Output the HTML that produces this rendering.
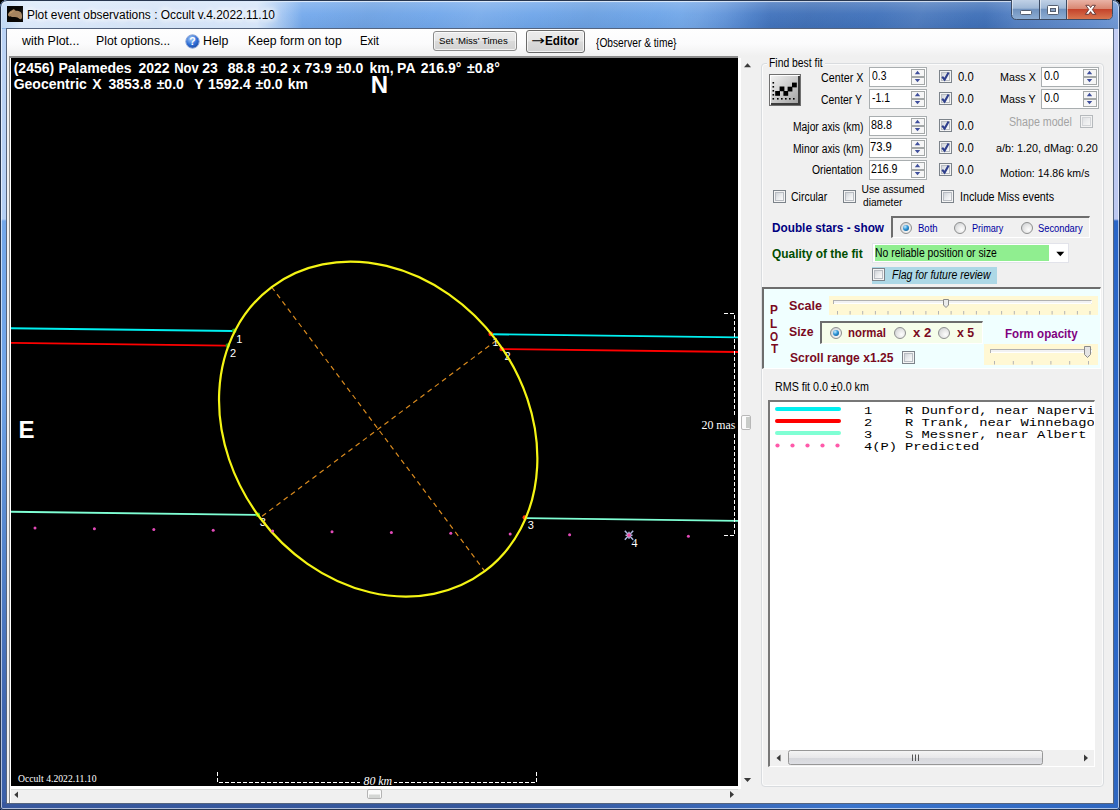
<!DOCTYPE html>
<html><head><meta charset="utf-8"><title>Plot event observations</title>
<style>
html,body{margin:0;padding:0;}
body{width:1120px;height:810px;overflow:hidden;background:#000;position:relative;font-family:"Liberation Sans",sans-serif;font-size:12px;color:#000;}
#win,#win div,#win svg{position:absolute;box-sizing:border-box;}
#win{left:0;top:0;width:1120px;height:810px;border-radius:7px 7px 3px 3px;overflow:hidden;background:#4a78c0;}
.t{white-space:pre;line-height:16px;height:16px;}
.btn{border:1px solid #8a8a8a;border-radius:3px;background:linear-gradient(180deg,#ececec 0,#e6e6e6 48%,#dadada 52%,#d2d2d2 100%);box-shadow:inset 0 0 0 1px rgba(255,255,255,.7);}
.cb{width:13px;height:13px;border:1px solid #7c838a;background:#f4f4f4;}
.cb::after{content:"";position:absolute;box-sizing:border-box;left:1px;top:1px;width:9px;height:9px;border:1px solid #b8bcc2;background:linear-gradient(135deg,#cfd3d8 0,#e9ebed 50%,#fbfbfb 100%);}
.rb{width:12px;height:12px;border:1px solid #8e8f8f;border-radius:50%;background:radial-gradient(circle at 65% 65%,#fdfdfd 0,#e8e8e8 45%,#c4c8cc 100%);}
.rb.on::after{content:"";position:absolute;left:2px;top:2px;width:6px;height:6px;border-radius:50%;background:radial-gradient(circle at 35% 30%,#c8ecff 0,#2b93d6 45%,#0f4a78 100%);}
.num{height:20px;width:58px;border:1px solid #a9aeb0;background:#fff;}
.sunk{border:1px solid #fff;border-top:2px solid #6d6d6d;border-left:2px solid #6d6d6d;}

</style></head><body>
<div id="win">
<!-- window frame glass -->
<div style="left:0;top:0;width:1120px;height:30px;background:linear-gradient(90deg,#8dbaf0 0,#74a9ec 300px,#6ca4e8 680px,#5b90d8 725px,#4274be 770px,#3f70b8 985px,#5583c8 1015px,#6a94d4 1120px)"></div>
<div style="left:0;top:0;width:1120px;height:30px;background:linear-gradient(180deg,rgba(255,255,255,.45) 0,rgba(255,255,255,.18) 3px,rgba(255,255,255,.04) 14px,rgba(0,0,0,.04) 30px)"></div>
<div style="left:0;top:0;width:1120px;height:30px;background:repeating-linear-gradient(115deg,rgba(255,255,255,0) 0,rgba(255,255,255,.07) 40px,rgba(255,255,255,0) 90px,rgba(0,0,0,.03) 140px,rgba(255,255,255,0) 200px)"></div>
<div style="left:2px;top:2px;width:300px;height:26px;background:linear-gradient(90deg,rgba(255,255,255,.45) 0,rgba(255,255,255,.68) 20px,rgba(255,255,255,.68) 255px,rgba(255,255,255,.3) 280px,rgba(255,255,255,0) 300px)"></div>
<div style="left:0;top:29px;width:8px;height:781px;background:linear-gradient(180deg,#bcd4f6 0,#b4cff4 190px,#74a8ea 192px,#6fa4e8 360px,#5384cc 520px,#3f66b0 680px,#3a5fa8 781px)"></div>
<div style="left:1112px;top:29px;width:8px;height:781px;background:linear-gradient(180deg,#c2ccf2 0,#bcc8f0 190px,#2a66c8 192px,#2c68c8 600px,#2e66c0 781px)"></div>
<div style="left:0;top:802px;width:1120px;height:8px;background:linear-gradient(90deg,#38589e 0,#35579c 500px,#3a66b4 700px,#3a74cc 850px,#2e66c0 1120px)"></div>
<div style="left:0;top:0;width:1120px;height:810px;border:1px solid #27364f;border-radius:7px 7px 3px 3px;box-shadow:inset 0 0 0 1px rgba(255,255,255,.6)"></div>
<div style="left:6px;top:28px;width:1108px;height:776px;border:1px solid #55647e;background:#f0f0f0"></div>
<!-- app icon -->
<svg style="left:7px;top:6px" width="16" height="16" viewBox="0 0 16 16"><rect width="16" height="16" fill="#070503"/><path d="M1 8.300 C1.500 6.500 3 5.300 4.500 4.600 C5.500 3.800 6.300 3 7 3.300 C7.600 3.600 8 4.500 9 4.700 C10.500 4.800 12.500 5 13.600 6 C14.800 7.200 15.200 9.500 15 11.300 C14.900 12.600 14.300 13.400 13.300 13.200 C12.300 13 11.800 12 10.500 11.500 C9 11 7 11 5.500 10.900 C3.800 10.800 2 10.600 1.300 9.700 C1 9.300 0.900 8.800 1 8.300Z" fill="#a5845f"/><path d="M1.800 8.200 C2.500 6.800 4 5.800 5.500 5.300 C6.300 4.800 6.800 4.200 7.200 4.600 C6.500 6 4.500 7.500 1.800 8.200Z" fill="#c9a06e" opacity=".8"/></svg>
<!-- caption buttons -->
<svg style="left:1009px;top:0" width="106" height="22" viewBox="0 0 106 22">
<defs><linearGradient id="cbg" x1="0" y1="0" x2="0" y2="1"><stop offset="0" stop-color="#c4d4e8"/><stop offset=".45" stop-color="#9fb8d6"/><stop offset=".5" stop-color="#7092be"/><stop offset="1" stop-color="#8eaed4"/></linearGradient>
<linearGradient id="cbr" x1="0" y1="0" x2="0" y2="1"><stop offset="0" stop-color="#e9b3a6"/><stop offset=".45" stop-color="#d98873"/><stop offset=".5" stop-color="#c5442c"/><stop offset="1" stop-color="#d9764f"/></linearGradient></defs>
<path d="M2.500 -1 V14.500 Q2.500 19.500 7.500 19.500 H98.500 Q103.500 19.500 103.500 14.500 V-1Z" fill="url(#cbg)" stroke="#3c4b63" stroke-width="1"/>
<path d="M57.500 0 V19 H98.500 Q103 19 103 14.500 V0Z" fill="url(#cbr)"/>
<path d="M30.500 0V19.500M57.500 0V19.500" stroke="#3c4b63"/><path d="M31.500 0V19M58.500 0V19M3.500 0V15" stroke="rgba(255,255,255,.5)"/>
<rect x="11.500" y="10.500" width="11" height="4" rx="1" fill="#fff" stroke="#555f70" stroke-width="1"/>
<rect x="38.500" y="5.500" width="11" height="9" rx="1" fill="#fff" stroke="#555f70"/><rect x="41.500" y="8.500" width="5" height="3" fill="#8ca3c4" stroke="#555f70"/>
<path d="M76.800 5.300 L80 5.300 L81.600 7.600 L83.200 5.300 L86.400 5.300 L83.400 9.600 L86.800 14.300 L83.400 14.300 L81.600 11.600 L79.800 14.300 L76.400 14.300 L79.800 9.600Z" fill="#fff" stroke="#5a3030" stroke-width="0.900"/>
</svg>
<!-- menu strip -->
<div style="left:7px;top:29px;width:1106px;height:27px;background:linear-gradient(180deg,#fefefe 0,#fbfbfc 55%,#f0f0f0 100%)"></div>
<svg style="left:185px;top:34px" width="15" height="15" viewBox="0 0 15 15"><defs><radialGradient id="hg" cx=".4" cy=".3" r=".8"><stop offset="0" stop-color="#a8ccf8"/><stop offset=".55" stop-color="#2f6fd6"/><stop offset="1" stop-color="#163f9a"/></radialGradient></defs><circle cx="7.500" cy="7.500" r="6.700" fill="url(#hg)" stroke="#8fa8d8" stroke-width="1"/><text x="7.500" y="11.300" text-anchor="middle" font-family="Liberation Sans,sans-serif" font-weight="bold" font-size="10.500" fill="#fff">?</text></svg>
<div class="btn" style="left:433px;top:31px;width:84px;height:20px"></div>
<div class="btn" style="left:526px;top:30px;width:59px;height:23px;border-color:#6a6a6a"></div>
<!-- plot area -->
<div style="left:9px;top:56px;width:746px;height:747px;background:#fff"></div><div style="left:9px;top:56px;width:729px;height:2px;background:#8c8c8c"></div><div style="left:9px;top:56px;width:1px;height:747px;background:#8c8c8c"></div><div style="left:738px;top:56px;width:17px;height:2px;background:#f0f0f0"></div>
<div style="left:741px;top:58px;width:14px;height:731px;background:#f0f0f0"></div>
<div style="left:11px;top:789px;width:727px;height:14px;background:#f0f0f0;border-top:1px solid #dcdedc"></div>
<div style="left:738px;top:789px;width:17px;height:14px;background:#f0f0f0"></div>
<div style="left:11px;top:58px;width:727px;height:728px;background:#000"></div>
<svg style="left:11px;top:58px" width="727" height="728" viewBox="11 58 727 728" font-family="Liberation Sans,sans-serif">
<line x1="11" y1="328.24" x2="232.5" y2="331.01" stroke="#00f0f0" stroke-width="1.800"/>
<line x1="492.5" y1="334.26" x2="738" y2="337.32" stroke="#00f0f0" stroke-width="1.800"/>
<line x1="11" y1="342.92" x2="226" y2="345.61" stroke="#ff0000" stroke-width="1.800"/>
<line x1="503" y1="349.07" x2="738" y2="352.01" stroke="#ff0000" stroke-width="1.800"/>
<line x1="11" y1="511.74" x2="256" y2="514.81" stroke="#7fffd4" stroke-width="1.800"/>
<line x1="526.5" y1="518.19" x2="738" y2="520.83" stroke="#7fffd4" stroke-width="1.800"/>
<line x1="271.6" y1="287.0" x2="484.8" y2="571.2" stroke="#d98a1e" stroke-width="1.200" stroke-dasharray="5 4"/>
<line x1="496.4" y1="340.4" x2="260.0" y2="517.8" stroke="#d98a1e" stroke-width="1.200" stroke-dasharray="5 4"/>
<circle cx="234.2" cy="330.8" r="2.300" fill="#1fae1f"/>
<circle cx="227.8" cy="345.6" r="2.300" fill="#1a8a1a"/>
<circle cx="257.8" cy="514.8" r="2.300" fill="#1fc81f"/>
<circle cx="490.7" cy="333.9" r="2.300" fill="#ff1010"/>
<circle cx="501.7" cy="349.0" r="2.300" fill="#ff1010"/>
<circle cx="524.8" cy="517.6" r="2.300" fill="#ff3a10"/>
<text x="236.3" y="343" font-size="11" fill="#fff">1</text>
<text x="230" y="356.8" font-size="11" fill="#fff">2</text>
<text x="259.7" y="526" font-size="11" fill="#fff">3</text>
<text x="492.6" y="345.7" font-size="11" fill="#fff">1</text>
<text x="504.4" y="359.8" font-size="11" fill="#fff">2</text>
<text x="527.7" y="529" font-size="11" fill="#fff">3</text>
<ellipse cx="378.2" cy="429.1" rx="177.6" ry="147.8" transform="rotate(53.13 378.2 429.1)" fill="none" stroke="#f4f414" stroke-width="2.200"/>
<circle cx="35.0" cy="528.0" r="1.500" fill="#e24ab8"/>
<circle cx="94.4" cy="528.7" r="1.500" fill="#e24ab8"/>
<circle cx="153.8" cy="529.5" r="1.500" fill="#e24ab8"/>
<circle cx="213.2" cy="530.2" r="1.500" fill="#e24ab8"/>
<circle cx="272.6" cy="531.0" r="1.500" fill="#e24ab8"/>
<circle cx="332.0" cy="531.7" r="1.500" fill="#e24ab8"/>
<circle cx="391.4" cy="532.5" r="1.500" fill="#e24ab8"/>
<circle cx="450.8" cy="533.2" r="1.500" fill="#e24ab8"/>
<circle cx="510.2" cy="533.9" r="1.500" fill="#e24ab8"/>
<circle cx="569.6" cy="534.7" r="1.500" fill="#e24ab8"/>
<circle cx="688.4" cy="536.2" r="1.500" fill="#e24ab8"/>
<g transform="translate(629,535.200)"><path d="M-4.200 -4.500L4.200 4.500M4.200 -4.500L-4.200 4.500M0 -3.500V3.500M-3.500 0H3.500" stroke="#aab6dc" stroke-width="1.500"/><circle r="2.400" fill="#b9a2d6"/><circle r="1.600" fill="#f0489c"/></g>
<text x="631.6" y="546.8" font-size="12" font-family="Liberation Serif,serif" fill="#fff">4</text>
<text y="73" font-size="14" font-weight="bold" fill="#fff"><tspan x="13.7">(2456)</tspan> <tspan x="58.5">Palamedes</tspan> <tspan x="138.4">2022</tspan> <tspan x="174.2" textLength="24.5" lengthAdjust="spacingAndGlyphs">Nov</tspan> <tspan x="202.2">23</tspan> <tspan x="227.7">88.8</tspan> <tspan x="260.6">±0.2</tspan> <tspan x="292.5">x</tspan> <tspan x="304.6">73.9</tspan> <tspan x="336.2">±0.0</tspan> <tspan x="369.4">km,</tspan> <tspan x="397.1">PA</tspan> <tspan x="420.7">216.9°</tspan> <tspan x="467.0">±0.8°</tspan></text>
<text y="88.8" font-size="14" font-weight="bold" fill="#fff"><tspan x="13.7">Geocentric</tspan> <tspan x="92.2">X</tspan> <tspan x="108.5">3853.8</tspan> <tspan x="156.7">±0.0</tspan> <tspan x="194.2">Y</tspan> <tspan x="207.9">1592.4</tspan> <tspan x="255.5">±0.0</tspan> <tspan x="287.8">km</tspan></text>
<text x="370.800" y="93.200" font-size="24" font-weight="bold" fill="#fff">N</text>
<text x="18.600" y="438" font-size="24" font-weight="bold" fill="#fff">E</text>
<path d="M217.500 772 V782.500 H360" fill="none" stroke="#fff" stroke-dasharray="4 2"/><path d="M536.500 772 V782.500 H394" fill="none" stroke="#fff" stroke-dasharray="4 2"/>
<text x="363.600" y="784.600" font-size="11.500" font-style="italic" font-family="Liberation Serif,serif" fill="#fff" textLength="28.500" lengthAdjust="spacingAndGlyphs">80 km</text>
<text x="18" y="781.500" font-size="10" font-family="Liberation Serif,serif" fill="#fff" textLength="78.500" lengthAdjust="spacingAndGlyphs">Occult 4.2022.11.10</text>
<path d="M724 313.500 H734.500 V417" fill="none" stroke="#fff" stroke-dasharray="4 2"/><path d="M724 535.500 H734.500 V433" fill="none" stroke="#fff" stroke-dasharray="4 2"/>
<text x="701.500" y="429" font-size="13.300" font-family="Liberation Serif,serif" fill="#fff" textLength="34" lengthAdjust="spacingAndGlyphs">20 mas</text>
</svg>
<svg style="left:738px;top:58px" width="17" height="745" viewBox="0 0 17 745"><path d="M6 9.300 L9.500 5.300 L13 9.300Z" fill="#3a3a3a"/><path d="M5.900 720 L9.500 724 L13.100 720Z" fill="#3a3a3a"/><rect x="3.500" y="357.500" width="9" height="14" rx="1.500" fill="#fafafa" stroke="#b8b8b8"/><rect x="8" y="359" width="4" height="11" fill="#c9ccc9"/></svg>
<svg style="left:11px;top:786px" width="727" height="17" viewBox="0 0 727 17"><path d="M7 5.500 L3.300 8.700 L7 12Z" fill="#3a3a3a"/><path d="M719 5 L723 8.500 L719 12Z" fill="#3a3a3a"/><rect x="356.500" y="3.500" width="14" height="9" rx="1.500" fill="#fafafa" stroke="#b4b4b4"/><rect x="358" y="8.500" width="11" height="3.500" fill="#d4d6d4"/></svg>
<div style="left:761px;top:63px;width:343px;height:724px;border:1px solid #d9dcdf;border-radius:4px;box-shadow:inset 0 0 0 1px #fbfbfb"></div>
<div style="left:767px;top:58px;width:58px;height:12px;background:#f0f0f0"></div>
<svg style="left:769px;top:74px" width="32" height="32" viewBox="0 0 32 32"><defs><linearGradient id="ib" x1="0" y1="0" x2="1" y2="1"><stop offset="0" stop-color="#f6f6f6"/><stop offset=".45" stop-color="#cfcfcf"/><stop offset="1" stop-color="#9c9c9c"/></linearGradient></defs>
<rect x="0.500" y="0.500" width="31" height="31" fill="url(#ib)" stroke="#707070"/><path d="M1.500 30.500V1.500H30.500" fill="none" stroke="#fff"/><path d="M2 30H30V2" fill="none" stroke="#3c3c3c" stroke-width="2"/>
<g fill="#000"><rect x="3.500" y="8" width="1.600" height="1.600"/><rect x="3.500" y="12" width="1.600" height="1.600"/><rect x="3.500" y="16" width="1.600" height="1.600"/><rect x="3.500" y="20" width="1.600" height="1.600"/><rect x="3.500" y="24" width="1.600" height="1.600"/>
<rect x="8" y="24" width="1.600" height="1.600"/><rect x="12" y="24" width="1.600" height="1.600"/><rect x="16" y="24" width="1.600" height="1.600"/><rect x="20" y="24" width="1.600" height="1.600"/><rect x="24" y="24" width="1.600" height="1.600"/></g>
<path d="M9 20 L13 15.500 L17 20 L21 15.500 L26 11" fill="none" stroke="#f4f4f4" stroke-width="1.300"/>
<g fill="#000"><rect x="6.200" y="17" width="4.800" height="4.800"/><rect x="10.600" y="12.500" width="4.800" height="4.800"/><rect x="14.400" y="17" width="4.800" height="4.800"/><rect x="18.600" y="12.700" width="4.800" height="4.800"/><rect x="23" y="8.600" width="4.800" height="4.800"/></g></svg>
<div class="num" style="left:869px;top:67px;width:58px"></div><svg style="left:910px;top:68px" width="16" height="18" viewBox="0 0 16 18"><rect x="1.500" y="1.500" width="13" height="7" fill="#f6f6f6" stroke="#a4a8a8"/><rect x="1.500" y="9.500" width="13" height="7" fill="#f6f6f6" stroke="#a4a8a8"/><path d="M4.800 6.200 L7.500 2.800 L10.200 6.200Z" fill="#3f4f9c"/><path d="M4.800 10.900 L7.500 14.200 L10.200 10.900Z" fill="#3f4f9c"/></svg>
<div class="num" style="left:869px;top:89px;width:58px"></div><svg style="left:910px;top:90px" width="16" height="18" viewBox="0 0 16 18"><rect x="1.500" y="1.500" width="13" height="7" fill="#f6f6f6" stroke="#a4a8a8"/><rect x="1.500" y="9.500" width="13" height="7" fill="#f6f6f6" stroke="#a4a8a8"/><path d="M4.800 6.200 L7.500 2.800 L10.200 6.200Z" fill="#3f4f9c"/><path d="M4.800 10.900 L7.500 14.200 L10.200 10.900Z" fill="#3f4f9c"/></svg>
<div class="num" style="left:869px;top:116px;width:58px"></div><svg style="left:910px;top:117px" width="16" height="18" viewBox="0 0 16 18"><rect x="1.500" y="1.500" width="13" height="7" fill="#f6f6f6" stroke="#a4a8a8"/><rect x="1.500" y="9.500" width="13" height="7" fill="#f6f6f6" stroke="#a4a8a8"/><path d="M4.800 6.200 L7.500 2.800 L10.200 6.200Z" fill="#3f4f9c"/><path d="M4.800 10.900 L7.500 14.200 L10.200 10.900Z" fill="#3f4f9c"/></svg>
<div class="num" style="left:869px;top:138px;width:58px"></div><svg style="left:910px;top:139px" width="16" height="18" viewBox="0 0 16 18"><rect x="1.500" y="1.500" width="13" height="7" fill="#f6f6f6" stroke="#a4a8a8"/><rect x="1.500" y="9.500" width="13" height="7" fill="#f6f6f6" stroke="#a4a8a8"/><path d="M4.800 6.200 L7.500 2.800 L10.200 6.200Z" fill="#3f4f9c"/><path d="M4.800 10.900 L7.500 14.200 L10.200 10.900Z" fill="#3f4f9c"/></svg>
<div class="num" style="left:869px;top:160px;width:58px"></div><svg style="left:910px;top:161px" width="16" height="18" viewBox="0 0 16 18"><rect x="1.500" y="1.500" width="13" height="7" fill="#f6f6f6" stroke="#a4a8a8"/><rect x="1.500" y="9.500" width="13" height="7" fill="#f6f6f6" stroke="#a4a8a8"/><path d="M4.800 6.200 L7.500 2.800 L10.200 6.200Z" fill="#3f4f9c"/><path d="M4.800 10.900 L7.500 14.200 L10.200 10.900Z" fill="#3f4f9c"/></svg>
<div class="cb" style="left:939px;top:70px;"></div>
<svg style="left:939px;top:70px" width="13" height="13" viewBox="0 0 13 13"><path d="M3.200 6.800 L5.600 9.600 L9.600 2.600" fill="none" stroke="#2f3f8c" stroke-width="2.100"/></svg>
<div class="cb" style="left:939px;top:92px;"></div>
<svg style="left:939px;top:92px" width="13" height="13" viewBox="0 0 13 13"><path d="M3.200 6.800 L5.600 9.600 L9.600 2.600" fill="none" stroke="#2f3f8c" stroke-width="2.100"/></svg>
<div class="cb" style="left:939px;top:119px;"></div>
<svg style="left:939px;top:119px" width="13" height="13" viewBox="0 0 13 13"><path d="M3.200 6.800 L5.600 9.600 L9.600 2.600" fill="none" stroke="#2f3f8c" stroke-width="2.100"/></svg>
<div class="cb" style="left:939px;top:141px;"></div>
<svg style="left:939px;top:141px" width="13" height="13" viewBox="0 0 13 13"><path d="M3.200 6.800 L5.600 9.600 L9.600 2.600" fill="none" stroke="#2f3f8c" stroke-width="2.100"/></svg>
<div class="cb" style="left:939px;top:163px;"></div>
<svg style="left:939px;top:163px" width="13" height="13" viewBox="0 0 13 13"><path d="M3.200 6.800 L5.600 9.600 L9.600 2.600" fill="none" stroke="#2f3f8c" stroke-width="2.100"/></svg>
<div class="num" style="left:1041px;top:67px;width:58px"></div><svg style="left:1082px;top:68px" width="16" height="18" viewBox="0 0 16 18"><rect x="1.500" y="1.500" width="13" height="7" fill="#f6f6f6" stroke="#a4a8a8"/><rect x="1.500" y="9.500" width="13" height="7" fill="#f6f6f6" stroke="#a4a8a8"/><path d="M4.800 6.200 L7.500 2.800 L10.200 6.200Z" fill="#3f4f9c"/><path d="M4.800 10.900 L7.500 14.200 L10.200 10.900Z" fill="#3f4f9c"/></svg>
<div class="num" style="left:1041px;top:89px;width:58px"></div><svg style="left:1082px;top:90px" width="16" height="18" viewBox="0 0 16 18"><rect x="1.500" y="1.500" width="13" height="7" fill="#f6f6f6" stroke="#a4a8a8"/><rect x="1.500" y="9.500" width="13" height="7" fill="#f6f6f6" stroke="#a4a8a8"/><path d="M4.800 6.200 L7.500 2.800 L10.200 6.200Z" fill="#3f4f9c"/><path d="M4.800 10.900 L7.500 14.200 L10.200 10.900Z" fill="#3f4f9c"/></svg>
<div class="cb" style="left:1080px;top:115px;opacity:.5;"></div>
<div class="cb" style="left:773px;top:190px;"></div>
<div class="cb" style="left:843px;top:190px;"></div>
<div class="cb" style="left:941px;top:190px;"></div>
<div class="sunk" style="left:891px;top:216px;width:199px;height:22px"></div>
<div class="rb on" style="left:900px;top:222px"></div>
<div class="rb" style="left:954px;top:222px"></div>
<div class="rb" style="left:1021px;top:222px"></div>
<div style="left:872px;top:243px;width:197px;height:20px;background:#fff;border:1px solid #e2e3ea"></div>
<div style="left:875px;top:245px;width:174px;height:16px;background:#90ee90"></div>
<svg style="left:1056px;top:251px" width="9" height="6" viewBox="0 0 9 6"><path d="M0.300 0.800 H8.300 L4.300 5.300Z" fill="#000"/></svg>
<div style="left:872px;top:267px;width:125px;height:17px;background:#add8e6"></div>
<div class="cb" style="left:872px;top:268px;"></div>
<div class="sunk" style="left:762px;top:287px;width:339px;height:82px;background:#f0ffff"></div>
<div style="left:829px;top:296px;width:269px;height:19px;background:#fff8d4"></div>
<div style="left:984px;top:344px;width:114px;height:21px;background:#fff8d4"></div>
<div class="sunk" style="left:820px;top:321px;width:163px;height:23px;background:#f6fdea"></div>
<svg style="left:0;top:0" width="1120" height="400" viewBox="0 0 1120 400"><rect x="833.500" y="300.500" width="258" height="3" fill="#f2f2f2" stroke="#b0b0b0"/><path d="M834 303.500H1091.500V300.500" fill="none" stroke="#fff"/><rect x="990.500" y="349.500" width="101" height="3" fill="#f2f2f2" stroke="#b0b0b0"/><path d="M991 352.500H1091.500V349.500" fill="none" stroke="#fff"/><rect x="837.0" y="311" width="1" height="3.500" fill="#b4b4b4"/><rect x="849.6" y="311" width="1" height="3.500" fill="#b4b4b4"/><rect x="862.2" y="311" width="1" height="3.500" fill="#b4b4b4"/><rect x="874.9" y="311" width="1" height="3.500" fill="#b4b4b4"/><rect x="887.5" y="311" width="1" height="3.500" fill="#b4b4b4"/><rect x="900.1" y="311" width="1" height="3.500" fill="#b4b4b4"/><rect x="912.8" y="311" width="1" height="3.500" fill="#b4b4b4"/><rect x="925.4" y="311" width="1" height="3.500" fill="#b4b4b4"/><rect x="938.0" y="311" width="1" height="3.500" fill="#b4b4b4"/><rect x="950.6" y="311" width="1" height="3.500" fill="#b4b4b4"/><rect x="963.2" y="311" width="1" height="3.500" fill="#b4b4b4"/><rect x="975.9" y="311" width="1" height="3.500" fill="#b4b4b4"/><rect x="988.5" y="311" width="1" height="3.500" fill="#b4b4b4"/><rect x="1001.1" y="311" width="1" height="3.500" fill="#b4b4b4"/><rect x="1013.8" y="311" width="1" height="3.500" fill="#b4b4b4"/><rect x="1026.4" y="311" width="1" height="3.500" fill="#b4b4b4"/><rect x="1039.0" y="311" width="1" height="3.500" fill="#b4b4b4"/><rect x="1051.6" y="311" width="1" height="3.500" fill="#b4b4b4"/><rect x="1064.2" y="311" width="1" height="3.500" fill="#b4b4b4"/><rect x="1076.9" y="311" width="1" height="3.500" fill="#b4b4b4"/><rect x="1089.5" y="311" width="1" height="3.500" fill="#b4b4b4"/><rect x="994.0" y="361" width="1" height="3.500" fill="#b4b4b4"/><rect x="1012.8" y="361" width="1" height="3.500" fill="#b4b4b4"/><rect x="1031.6" y="361" width="1" height="3.500" fill="#b4b4b4"/><rect x="1050.4" y="361" width="1" height="3.500" fill="#b4b4b4"/><rect x="1069.2" y="361" width="1" height="3.500" fill="#b4b4b4"/><rect x="1088.0" y="361" width="1" height="3.500" fill="#b4b4b4"/><path d="M943.500 299.500 H948.500 V305 L946 307.500 L943.500 305Z" fill="#ececec" stroke="#8a8a8a"/><path d="M1084.500 346.500 H1090.500 V354.500 L1087.500 357.500 L1084.500 354.500Z" fill="#e4e4e4" stroke="#8a8a8a"/></svg>
<div class="rb on" style="left:830px;top:327px"></div>
<div class="rb" style="left:894px;top:327px"></div>
<div class="rb" style="left:938px;top:327px"></div>
<div class="cb" style="left:902px;top:351px;"></div>
<div style="left:768px;top:400px;width:327px;height:367px;background:#fff;border:1px solid #fff;border-top:2px solid #777;border-left:2px solid #777"></div>
<div style="left:775px;top:407px;width:66px;height:4px;border-radius:2px;background:#00f0f0"></div>
<div style="left:775px;top:418.9px;width:66px;height:4px;border-radius:2px;background:#ff0000"></div>
<div style="left:775px;top:430.8px;width:66px;height:4px;border-radius:2px;background:#7fffd4"></div>
<svg style="left:770px;top:440px" width="80" height="12" viewBox="770 440 80 12"><circle cx="777.5" cy="445.500" r="2.100" fill="#ff5aaa"/><circle cx="792.5" cy="445.500" r="2.100" fill="#ff5aaa"/><circle cx="807.5" cy="445.500" r="2.100" fill="#ff5aaa"/><circle cx="822.5" cy="445.500" r="2.100" fill="#ff5aaa"/><circle cx="837.5" cy="445.500" r="2.100" fill="#ff5aaa"/></svg>
<div style="left:860px;top:402px;width:234px;height:16px;overflow:hidden;font-family:'Liberation Mono',monospace;font-size:11.5px;line-height:13px;white-space:pre;"><div style="left:4.2px;top:1.6px;transform:scaleX(1.196);transform-origin:0 0">1</div><div style="left:44.800px;top:1.6px;transform:scaleX(1.196);transform-origin:0 0">R Dunford, near Napervi</div></div>
<div style="left:860px;top:414px;width:234px;height:16px;overflow:hidden;font-family:'Liberation Mono',monospace;font-size:11.5px;line-height:13px;white-space:pre;"><div style="left:4.2px;top:1.6px;transform:scaleX(1.196);transform-origin:0 0">2</div><div style="left:44.800px;top:1.6px;transform:scaleX(1.196);transform-origin:0 0">R Trank, near Winnebago</div></div>
<div style="left:860px;top:426px;width:234px;height:16px;overflow:hidden;font-family:'Liberation Mono',monospace;font-size:11.5px;line-height:13px;white-space:pre;"><div style="left:4.2px;top:1.6px;transform:scaleX(1.196);transform-origin:0 0">3</div><div style="left:44.800px;top:1.6px;transform:scaleX(1.196);transform-origin:0 0">S Messner, near Albert</div></div>
<div style="left:860px;top:438px;width:234px;height:16px;overflow:hidden;font-family:'Liberation Mono',monospace;font-size:11.5px;line-height:13px;white-space:pre;"><div style="left:4.2px;top:1.6px;transform:scaleX(1.196);transform-origin:0 0">4(P)</div><div style="left:44.800px;top:1.6px;transform:scaleX(1.196);transform-origin:0 0">Predicted</div></div>
<div style="left:770px;top:750px;width:324px;height:16px;background:#f0f0f0"></div>
<svg style="left:770px;top:750px" width="324" height="17" viewBox="0 0 324 17"><defs><linearGradient id="th" x1="0" y1="0" x2="0" y2="1"><stop offset="0" stop-color="#f5f5f5"/><stop offset=".5" stop-color="#e8e8ea"/><stop offset=".5" stop-color="#d6d7db"/><stop offset="1" stop-color="#dedfe4"/></linearGradient></defs><path d="M10.500 4.500 L6.500 8 L10.500 11.500Z" fill="#3a3a3a"/><path d="M314 4.500 L318 8 L314 11.500Z" fill="#3a3a3a"/><rect x="18.500" y="0.500" width="254" height="14" rx="2" fill="url(#th)" stroke="#979797"/><path d="M142.500 4.500V11M145.500 4.500V11M148.500 4.500V11" stroke="#555"/></svg>
<div class="t" style="left:27.31px;top:7.04px;font-family:'Liberation Sans',sans-serif;font-size:12px;color:#000;transform:scaleX(0.9927);transform-origin:0 0;text-shadow:0 0 8px #fff,0 0 8px #fff,0 0 5px #fff,0 0 12px #fff;">Plot event observations : Occult v.4.2022.11.10</div>
<div class="t" style="left:22.00px;top:32.84px;font-family:'Liberation Sans',sans-serif;font-size:12px;color:#000;transform:scaleX(1.0370);transform-origin:0 0;">with Plot...</div>
<div class="t" style="left:96.48px;top:32.84px;font-family:'Liberation Sans',sans-serif;font-size:12px;color:#000;transform:scaleX(1.0211);transform-origin:0 0;">Plot options...</div>
<div class="t" style="left:202.77px;top:32.84px;font-family:'Liberation Sans',sans-serif;font-size:12px;color:#000;transform:scaleX(1.0304);transform-origin:0 0;">Help</div>
<div class="t" style="left:248.28px;top:32.84px;font-family:'Liberation Sans',sans-serif;font-size:12px;color:#000;transform:scaleX(1.0176);transform-origin:0 0;">Keep form on top</div>
<div class="t" style="left:360.45px;top:32.84px;font-family:'Liberation Sans',sans-serif;font-size:12px;color:#000;transform:scaleX(0.9474);transform-origin:0 0;">Exit</div>
<div class="t" style="left:439.47px;top:32.88px;font-family:'Liberation Sans',sans-serif;font-size:9.3px;color:#000;transform:scaleX(1.0323);transform-origin:0 0;">Set 'Miss' Times</div>
<div class="t" style="left:531.04px;top:33.40px;font-family:'DejaVu Sans',sans-serif;font-size:13px;color:#000;transform:scaleX(1.2600);transform-origin:0 0;">→</div>
<div class="t" style="left:544.70px;top:33.40px;font-family:'Liberation Sans',sans-serif;font-size:13px;font-weight:bold;color:#000;transform:scaleX(0.9027);transform-origin:0 0;">Editor</div>
<div class="t" style="left:596.00px;top:34.74px;font-family:'Liberation Sans',sans-serif;font-size:12px;color:#000;transform:scaleX(0.8495);transform-origin:0 0;">{Observer &amp; time}</div>
<div class="t" style="left:768.54px;top:55.24px;font-family:'Liberation Sans',sans-serif;font-size:12px;color:#000;transform:scaleX(0.8639);transform-origin:0 0;">Find best fit</div>
<div class="t" style="left:821.00px;top:70.24px;font-family:'Liberation Sans',sans-serif;font-size:12px;color:#000;transform:scaleX(0.8957);transform-origin:0 0;">Center X</div>
<div class="t" style="left:821.03px;top:91.94px;font-family:'Liberation Sans',sans-serif;font-size:12px;color:#000;transform:scaleX(0.8696);transform-origin:0 0;">Center Y</div>
<div class="t" style="left:792.94px;top:119.24px;font-family:'Liberation Sans',sans-serif;font-size:12px;color:#000;transform:scaleX(0.8600);transform-origin:0 0;">Major axis (km)</div>
<div class="t" style="left:792.94px;top:141.04px;font-family:'Liberation Sans',sans-serif;font-size:12px;color:#000;transform:scaleX(0.8600);transform-origin:0 0;">Minor axis (km)</div>
<div class="t" style="left:811.90px;top:162.24px;font-family:'Liberation Sans',sans-serif;font-size:12px;color:#000;transform:scaleX(0.8621);transform-origin:0 0;">Orientation</div>
<div class="t" style="left:958.00px;top:69.34px;font-family:'Liberation Sans',sans-serif;font-size:12px;color:#000;transform:scaleX(0.9375);transform-origin:0 0;">0.0</div>
<div class="t" style="left:958.00px;top:91.34px;font-family:'Liberation Sans',sans-serif;font-size:12px;color:#000;transform:scaleX(0.9375);transform-origin:0 0;">0.0</div>
<div class="t" style="left:958.00px;top:118.24px;font-family:'Liberation Sans',sans-serif;font-size:12px;color:#000;transform:scaleX(0.9375);transform-origin:0 0;">0.0</div>
<div class="t" style="left:958.00px;top:140.24px;font-family:'Liberation Sans',sans-serif;font-size:12px;color:#000;transform:scaleX(0.9375);transform-origin:0 0;">0.0</div>
<div class="t" style="left:958.00px;top:161.74px;font-family:'Liberation Sans',sans-serif;font-size:12px;color:#000;transform:scaleX(0.9375);transform-origin:0 0;">0.0</div>
<div class="t" style="left:871.60px;top:67.74px;font-family:'Liberation Sans',sans-serif;font-size:12px;color:#000;transform:scaleX(0.8625);transform-origin:0 0;">0.3</div>
<div class="t" style="left:871.60px;top:89.74px;font-family:'Liberation Sans',sans-serif;font-size:12px;color:#000;transform:scaleX(0.8700);transform-origin:0 0;">-1.1</div>
<div class="t" style="left:871.30px;top:117.24px;font-family:'Liberation Sans',sans-serif;font-size:12px;color:#000;transform:scaleX(0.8957);transform-origin:0 0;">88.8</div>
<div class="t" style="left:870.36px;top:139.04px;font-family:'Liberation Sans',sans-serif;font-size:12px;color:#000;transform:scaleX(0.9364);transform-origin:0 0;">73.9</div>
<div class="t" style="left:871.02px;top:161.24px;font-family:'Liberation Sans',sans-serif;font-size:12px;color:#000;transform:scaleX(0.8828);transform-origin:0 0;">216.9</div>
<div class="t" style="left:1043.50px;top:67.74px;font-family:'Liberation Sans',sans-serif;font-size:12px;color:#000;transform:scaleX(0.9062);transform-origin:0 0;">0.0</div>
<div class="t" style="left:1043.50px;top:89.74px;font-family:'Liberation Sans',sans-serif;font-size:12px;color:#000;transform:scaleX(0.9062);transform-origin:0 0;">0.0</div>
<div class="t" style="left:999.56px;top:70.13px;font-family:'Liberation Sans',sans-serif;font-size:10.3px;color:#000;transform:scaleX(1.0424);transform-origin:0 0;">Mass X</div>
<div class="t" style="left:999.56px;top:92.13px;font-family:'Liberation Sans',sans-serif;font-size:10.3px;color:#000;transform:scaleX(1.0424);transform-origin:0 0;">Mass Y</div>
<div class="t" style="left:1009.11px;top:114.04px;font-family:'Liberation Sans',sans-serif;font-size:12px;color:#a3a3a3;transform:scaleX(0.8884);transform-origin:0 0;">Shape model</div>
<div class="t" style="left:996.30px;top:140.83px;font-family:'Liberation Sans',sans-serif;font-size:10.3px;color:#000;transform:scaleX(1.0464);transform-origin:0 0;">a/b: 1.20, dMag: 0.20</div>
<div class="t" style="left:999.57px;top:165.83px;font-family:'Liberation Sans',sans-serif;font-size:10.3px;color:#000;transform:scaleX(1.0279);transform-origin:0 0;">Motion: 14.86 km/s</div>
<div class="t" style="left:791.02px;top:189.34px;font-family:'Liberation Sans',sans-serif;font-size:12px;color:#000;transform:scaleX(0.8750);transform-origin:0 0;">Circular</div>
<div class="t" style="left:861.50px;top:181.83px;font-family:'Liberation Sans',sans-serif;font-size:10.3px;color:#000;">Use assumed</div>
<div class="t" style="left:862.50px;top:194.83px;font-family:'Liberation Sans',sans-serif;font-size:10.3px;color:#000;transform:scaleX(0.9850);transform-origin:0 0;">diameter</div>
<div class="t" style="left:959.71px;top:189.04px;font-family:'Liberation Sans',sans-serif;font-size:12px;color:#000;transform:scaleX(0.8933);transform-origin:0 0;">Include Miss events</div>
<div class="t" style="left:771.82px;top:220.24px;font-family:'Liberation Sans',sans-serif;font-size:12px;font-weight:bold;color:#000080;transform:scaleX(0.9823);transform-origin:0 0;">Double stars - show</div>
<div class="t" style="left:917.85px;top:220.94px;font-family:'Liberation Sans',sans-serif;font-size:10px;color:#0000a0;transform:scaleX(0.9526);transform-origin:0 0;">Both</div>
<div class="t" style="left:971.59px;top:220.94px;font-family:'Liberation Sans',sans-serif;font-size:10px;color:#0000a0;transform:scaleX(0.9118);transform-origin:0 0;">Primary</div>
<div class="t" style="left:1038.07px;top:220.94px;font-family:'Liberation Sans',sans-serif;font-size:10px;color:#0000a0;transform:scaleX(0.9319);transform-origin:0 0;">Secondary</div>
<div class="t" style="left:772.00px;top:245.74px;font-family:'Liberation Sans',sans-serif;font-size:12px;font-weight:bold;color:#004d00;transform:scaleX(0.9923);transform-origin:0 0;">Quality of the fit</div>
<div class="t" style="left:874.73px;top:245.04px;font-family:'Liberation Sans',sans-serif;font-size:12px;color:#000;transform:scaleX(0.8662);transform-origin:0 0;">No reliable position or size</div>
<div class="t" style="left:891.90px;top:267.24px;font-family:'Liberation Sans',sans-serif;font-size:12px;font-style:italic;color:#000;transform:scaleX(0.8735);transform-origin:0 0;">Flag for future review</div>
<div class="t" style="left:769.61px;top:302.24px;font-family:'Liberation Sans',sans-serif;font-size:12px;font-weight:bold;color:#7a0a1e;transform:scaleX(0.9857);transform-origin:0 0;">P</div>
<div class="t" style="left:770.02px;top:315.64px;font-family:'Liberation Sans',sans-serif;font-size:12px;font-weight:bold;color:#7a0a1e;transform:scaleX(0.9833);transform-origin:0 0;">L</div>
<div class="t" style="left:770.20px;top:328.74px;font-family:'Liberation Sans',sans-serif;font-size:12px;font-weight:bold;color:#7a0a1e;transform:scaleX(0.8667);transform-origin:0 0;">O</div>
<div class="t" style="left:770.60px;top:341.34px;font-family:'Liberation Sans',sans-serif;font-size:12px;font-weight:bold;color:#7a0a1e;transform:scaleX(0.9857);transform-origin:0 0;">T</div>
<div class="t" style="left:789.35px;top:297.74px;font-family:'Liberation Sans',sans-serif;font-size:12px;font-weight:bold;color:#7a0a1e;transform:scaleX(1.0500);transform-origin:0 0;">Scale</div>
<div class="t" style="left:789.38px;top:324.04px;font-family:'Liberation Sans',sans-serif;font-size:12px;font-weight:bold;color:#7a0a1e;transform:scaleX(1.0174);transform-origin:0 0;">Size</div>
<div class="t" style="left:848.05px;top:325.04px;font-family:'Liberation Sans',sans-serif;font-size:12px;font-weight:bold;color:#7a0a1e;transform:scaleX(0.9474);transform-origin:0 0;">normal</div>
<div class="t" style="left:912.50px;top:325.04px;font-family:'Liberation Sans',sans-serif;font-size:12px;font-weight:bold;color:#7a0a1e;transform:scaleX(1.0938);transform-origin:0 0;">x 2</div>
<div class="t" style="left:956.50px;top:325.04px;font-family:'Liberation Sans',sans-serif;font-size:12px;font-weight:bold;color:#7a0a1e;transform:scaleX(1.0294);transform-origin:0 0;">x 5</div>
<div class="t" style="left:1004.64px;top:325.64px;font-family:'Liberation Sans',sans-serif;font-size:12px;font-weight:bold;color:#800080;transform:scaleX(0.9635);transform-origin:0 0;">Form opacity</div>
<div class="t" style="left:790.29px;top:350.24px;font-family:'Liberation Sans',sans-serif;font-size:12px;font-weight:bold;color:#7a0a1e;transform:scaleX(1.0069);transform-origin:0 0;">Scroll range x1.25</div>
<div class="t" style="left:775.41px;top:379.34px;font-family:'Liberation Sans',sans-serif;font-size:12px;color:#000;transform:scaleX(0.8913);transform-origin:0 0;">RMS fit 0.0 ±0.0 km</div>

</div>
</body></html>
